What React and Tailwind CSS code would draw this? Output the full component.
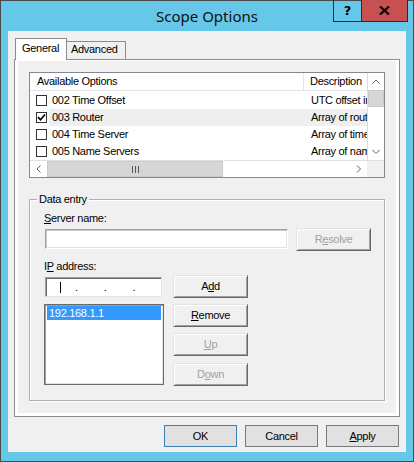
import React from 'react';

const options = [
  { label: '002 Time Offset', desc: 'UTC offset in seconds', checked: false },
  { label: '003 Router', desc: 'Array of router addresses ordered by preference', checked: true, selected: true },
  { label: '004 Time Server', desc: 'Array of time server addresses, by preference', checked: false },
  { label: '005 Name Servers', desc: 'Array of name servers [IEN 116], by preference', checked: false },
];

function Chevron({ dir }) {
  const paths = {
    up: 'M0.5 4.5L4 1L7.5 4.5',
    down: 'M0.5 1L4 4.5L7.5 1',
    left: 'M4.5 0.5L1 4L4.5 7.5',
    right: 'M1 0.5L4.5 4L1 7.5',
  };
  const vertical = dir === 'up' || dir === 'down';
  return (
    <svg
      width={vertical ? 8 : 6}
      height={vertical ? 6 : 8}
      viewBox={vertical ? '0 0 8 6' : '0 0 6 8'}
      fill="none"
      stroke="#606060"
      strokeWidth="1"
    >
      <path d={paths[dir]} />
    </svg>
  );
}

// classic 3D push button used inside the property page
function Btn({ children, disabled, className = '' }) {
  return (
    <div
      className={`h-[23px] w-[75px] flex items-center justify-center bg-[#f0f0f0] border border-t-[#e3e3e3] border-l-[#e3e3e3] border-b-[#696969] border-r-[#696969] shadow-[inset_1px_1px_0_#ffffff,inset_-1px_-1px_0_#a0a0a0] ${
        disabled ? 'text-[#a0a0a0]' : 'text-black'
      } ${className}`}
    >
      {children}
    </div>
  );
}

const U = ({ children }) => <span className="underline underline-offset-1">{children}</span>;

export default function App() {
  return (
    <div className="w-[414px] h-[462px] bg-[#65c8e9] border border-[#4a4a4a] flex flex-col relative text-[11px] tracking-[-0.3px] leading-[13px] text-black font-['Liberation_Sans',Arial,sans-serif] select-none">
      {/* Title bar */}
      <div className="h-[30px] flex items-center justify-center pb-[1px]">
        <span className="font-['Noto_Sans',sans-serif] text-[15px] tracking-normal leading-[20px] text-[#111]">
          Scope Options
        </span>
      </div>

      {/* Caption buttons */}
      <div className="absolute top-[-1px] right-[5px] flex">
        <div className="w-[28px] h-[22px] border-l border-b border-[#2b2b2b] flex items-center justify-center">
          <span className="font-bold text-[13px] tracking-normal leading-[13px] font-['DejaVu_Sans',sans-serif]">?</span>
        </div>
        <div className="w-[47px] h-[22px] bg-[#c75050] border-l border-r border-b border-[#2b2b2b] flex items-center justify-center">
          <svg width="11" height="9" viewBox="0 0 11 9" stroke="#000" strokeWidth="2.2" fill="none">
            <path d="M1 0.5L10 8.5M10 0.5L1 8.5" />
          </svg>
        </div>
      </div>

      {/* Client area */}
      <div className="mx-[7px] h-[421px] bg-[#f0f0f0] flex flex-col pt-[7px] px-[6px]">
        {/* Tabs */}
        <div className="h-[21px] flex items-start ml-[1px]">
          <div className="relative z-10 h-[22px] w-[52px] bg-white border-t border-l border-r border-[#8c8c8c] flex items-center pl-[6px] pb-[2px]">
            General
          </div>
          <div className="mt-[3px] h-[18px] w-[59px] border-t border-r border-[#8c8c8c] flex items-center pl-[4px] pb-[2px]">
            Advanced
          </div>
        </div>

        {/* Tab panel */}
        <div className="h-[358px] border border-[#8c8c8c] bg-white px-[3px] pt-[1px] pb-[3px] flex flex-col">
          <div className="flex-1 bg-[#f0f0f0] pl-[11px] pt-[11px] flex flex-col">
            {/* List view */}
            <div className="w-[356px] h-[106px] border border-[#828790] bg-white flex flex-col">
              <div className="flex h-[87px]">
                <div className="flex-1 flex flex-col overflow-hidden">
                  <div className="h-[18px] flex border-b border-[#e5e5e5] shrink-0">
                    <div className="w-[274px] pl-[7px] flex items-center border-r border-[#e5e5e5]">
                      Available Options
                    </div>
                    <div className="flex-1 pl-[6px] flex items-center whitespace-nowrap overflow-hidden">
                      Description
                    </div>
                  </div>
                  <div className="h-[1px] shrink-0" />
                  {options.map((o) => (
                    <div key={o.label} className="h-[17px] flex shrink-0">
                      <div className="w-[19px] flex items-center pl-[6px]">
                        <div className="w-[11px] h-[11px] border border-[#333333] bg-white flex items-center justify-center">
                          {o.checked && (
                            <svg width="9" height="9" viewBox="0 0 9 9" fill="none" stroke="#000" strokeWidth="1.7">
                              <path d="M1 4.2L3.5 6.8L8 1.5" />
                            </svg>
                          )}
                        </div>
                      </div>
                      <div className={`flex-1 flex ${o.selected ? 'bg-[#efefef]' : ''}`}>
                        <div className="w-[255px] pl-[3px] flex items-center whitespace-nowrap overflow-hidden">
                          {o.label}
                        </div>
                        <div className="w-[63px] pl-[7px] flex items-center whitespace-nowrap overflow-hidden">
                          {o.desc}
                        </div>
                      </div>
                    </div>
                  ))}
                </div>
                {/* vertical scrollbar */}
                <div className="w-[17px] border-l border-[#dcdcdc] flex flex-col">
                  <div className="h-[17px] flex items-center justify-center">
                    <Chevron dir="up" />
                  </div>
                  <div className="h-[17px] bg-[#d6d6d6] border border-[#cacaca]" />
                  <div className="flex-1" />
                  <div className="h-[17px] flex items-center justify-center">
                    <Chevron dir="down" />
                  </div>
                </div>
              </div>
              {/* horizontal scrollbar */}
              <div className="h-[17px] flex border-t border-[#e0e0e0]">
                <div className="w-[17px] flex items-center justify-center">
                  <Chevron dir="left" />
                </div>
                <div className="w-[176px] bg-[#d6d6d6] border border-[#cacaca] flex items-center justify-center">
                  <svg width="7" height="7" viewBox="0 0 7 7" stroke="#555" strokeWidth="1">
                    <path d="M0.5 0V7M3.5 0V7M6.5 0V7" />
                  </svg>
                </div>
                <div className="w-[127px]" />
                <div className="w-[17px] flex items-center justify-center">
                  <Chevron dir="right" />
                </div>
                <div className="w-[17px] bg-[#f0f0f0]" />
              </div>
            </div>

            {/* Data entry group */}
            <div className="mt-[21px] w-[356px] border border-[#b0b0b0] shadow-[1px_1px_0_#ffffff,inset_1px_1px_0_#ffffff] flex flex-col pl-[14px] pb-[14px]">
              <span className="-mt-[8px] -ml-[7px] w-fit px-[2px] bg-[#f0f0f0] leading-[14px]">Data entry</span>

              <div className="mt-[6px]">
                <U>S</U>erver name:
              </div>
              <div className="mt-[3px] flex items-start">
                <div className="mt-[1px] ml-[1px] w-[243px] h-[20px] bg-white border border-t-[#a0a0a0] border-l-[#a0a0a0] border-b-white border-r-white shadow-[inset_1px_1px_0_#c8c8c8,inset_-1px_-1px_0_#e3e3e3]" />
                <Btn disabled className="ml-[8px]">
                  R<U>e</U>solve
                </Btn>
              </div>

              <div className="mt-[9px]">
                I<U>P</U> address:
              </div>
              <div className="mt-[2px] flex items-start">
                <div className="w-[120px] flex flex-col">
                  <div className="mt-[2px] ml-[1px] w-[117px] h-[20px] bg-white border border-t-[#a0a0a0] border-l-[#a0a0a0] border-b-[#e3e3e3] border-r-[#e3e3e3] shadow-[inset_1px_1px_0_#696969] flex items-center">
                    <div className="w-[29px] flex justify-center">
                      <div className="w-[1px] h-[11px] bg-black" />
                    </div>
                    <span>.</span>
                    <div className="w-[26px]" />
                    <span>.</span>
                    <div className="w-[26px]" />
                    <span>.</span>
                  </div>
                  <div className="mt-[7px] h-[81px] bg-white border border-[#6a6a6a] shadow-[inset_1px_1px_0_#a0a0a0,inset_-1px_-1px_0_#e3e3e3] pt-[1px] px-[2px]">
                    <div className="h-[14px] bg-[#3399ff] text-white pl-[2px] flex items-center">192.168.1.1</div>
                  </div>
                </div>
                <div className="ml-[9px] flex flex-col">
                  <Btn>
                    A<U>d</U>d
                  </Btn>
                  <Btn className="mt-[6px]">
                    <U>R</U>emove
                  </Btn>
                  <Btn disabled className="mt-[6px]">
                    <U>U</U>p
                  </Btn>
                  <Btn disabled className="mt-[7px]">
                    D<U>o</U>wn
                  </Btn>
                </div>
              </div>
            </div>
          </div>
        </div>

        {/* Dialog buttons */}
        <div className="mt-[8px] flex justify-end gap-[8px] pr-[1px]">
          <div className="w-[73px] h-[22px] bg-[#e1e1e1] border border-[#3c7fb1] flex items-center justify-center">
            OK
          </div>
          <div className="w-[73px] h-[22px] bg-[#e1e1e1] border border-[#7a7a7a] flex items-center justify-center">
            Cancel
          </div>
          <div className="w-[73px] h-[22px] bg-[#e1e1e1] border border-[#7a7a7a] flex items-center justify-center">
            <U>A</U>pply
          </div>
        </div>
      </div>
    </div>
  );
}
